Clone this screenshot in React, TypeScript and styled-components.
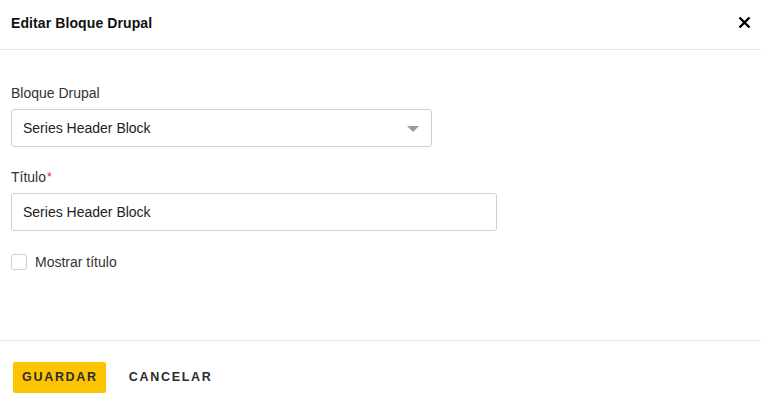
import React from "react";
import styled, { createGlobalStyle } from "styled-components";

const Global = createGlobalStyle`
  html, body { margin: 0; padding: 0; background: #fff; }
  body { font-family: "Liberation Sans", Arial, sans-serif; color: #333; }
  * { box-sizing: border-box; }
`;

const Modal = styled.div`
  width: 761px;
  height: 411px;
  display: flex;
  flex-direction: column;
  background: #fff;
`;

const Header = styled.div`
  height: 50px;
  flex: none;
  display: flex;
  align-items: center;
  justify-content: space-between;
  padding: 0 10px 4px 11px;
  border-bottom: 1px solid #e6e6e6;
`;

const Title = styled.h2`
  margin: 0;
  font-size: 14px;
  font-weight: 700;
  letter-spacing: 0.1px;
  color: #111;
`;

const Close = styled.button`
  border: 0;
  background: none;
  padding: 0;
  width: 14px;
  height: 14px;
  display: flex;
  align-items: center;
  justify-content: center;
  cursor: pointer;
`;

const Body = styled.div`
  flex: 1;
  padding: 35px 11px 0 11px;
  display: flex;
  flex-direction: column;
`;

const Field = styled.div<{ $width: number }>`
  width: ${(p) => p.$width}px;
  margin-bottom: 22px;
  display: flex;
  flex-direction: column;
`;

const Label = styled.label`
  font-size: 14px;
  line-height: 17px;
  color: #333;
  margin-bottom: 7px;
`;

const Required = styled.span`
  color: #d9272e;
  font-size: 12px;
  margin-left: 1px;
  vertical-align: top;
`;

const Box = styled.div`
  height: 38px;
  border: 1px solid #cfcfcf;
  border-radius: 3px;
  display: flex;
  align-items: center;
  justify-content: space-between;
  padding: 0 12px 0 11px;
  font-size: 14px;
  color: #222;
`;

const Arrow = styled.span`
  width: 0;
  height: 0;
  border-left: 6px solid transparent;
  border-right: 6px solid transparent;
  border-top: 6px solid #999;
  margin-top: 1px;
`;

const CheckRow = styled.div`
  display: flex;
  align-items: center;
  gap: 8px;
  margin-top: 1px;
  font-size: 14px;
  line-height: 16px;
  color: #333;
`;

const Check = styled.span`
  width: 16px;
  height: 16px;
  border: 1px solid #cfcfcf;
  border-radius: 3px;
  background: #fff;
`;

const Footer = styled.div`
  height: 71px;
  flex: none;
  border-top: 1px solid #e6e6e6;
  display: flex;
  align-items: center;
  gap: 14px;
  padding: 2px 13px 0 13px;
`;

const Button = styled.button<{ $primary?: boolean }>`
  height: 31px;
  padding: 0 8px 0 9px;
  border: 0;
  border-radius: 2px;
  background: ${(p) => (p.$primary ? "#fdc500" : "transparent")};
  color: #2b2b2b;
  font-family: "Liberation Sans", Arial, sans-serif;
  font-weight: 700;
  font-size: 12.5px;
  letter-spacing: 1.7px;
  cursor: pointer;
`;

export default function App() {
  return (
    <>
      <Global />
      <Modal>
        <Header>
          <Title>Editar Bloque Drupal</Title>
          <Close aria-label="Cerrar">
            <svg width="13" height="13" viewBox="0 0 13 13">
              <path d="M1.5 1.5 L11.5 11.5 M11.5 1.5 L1.5 11.5" stroke="#000" strokeWidth="2.4" strokeLinecap="butt" />
            </svg>
          </Close>
        </Header>
        <Body>
          <Field $width={421}>
            <Label>Bloque Drupal</Label>
            <Box>
              Series Header Block
              <Arrow />
            </Box>
          </Field>
          <Field $width={486}>
            <Label>
              Título<Required>*</Required>
            </Label>
            <Box>Series Header Block</Box>
          </Field>
          <CheckRow>
            <Check />
            Mostrar título
          </CheckRow>
        </Body>
        <Footer>
          <Button $primary>GUARDAR</Button>
          <Button>CANCELAR</Button>
        </Footer>
      </Modal>
    </>
  );
}
